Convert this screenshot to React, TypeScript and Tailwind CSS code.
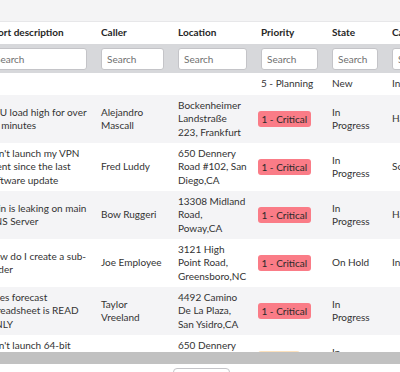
import React from "react";

const cols = "grid grid-cols-[114px_77px_83px_71px_60px_80px]";

type Row = {
  desc: string;
  caller: string;
  location: string;
  priority: string;
  badge: string;
  state: string;
  category: string;
};

const rows: Row[] = [
  {
    desc: "CPU load high for over 10 minutes",
    caller: "Alejandro Mascall",
    location: "Bockenheimer Landstraße 223, Frankfurt",
    priority: "1 - Critical",
    badge: "bg-[#fa7c87]",
    state: "In Progress",
    category: "Hardware",
  },
  {
    desc: "Can't launch my VPN client since the last software update",
    caller: "Fred Luddy",
    location: "650 Dennery Road #102, San Diego,CA",
    priority: "1 - Critical",
    badge: "bg-[#fa7c87]",
    state: "In Progress",
    category: "Software",
  },
  {
    desc: "Rain is leaking on main DNS Server",
    caller: "Bow Ruggeri",
    location: "13308 Midland Road, Poway,CA",
    priority: "1 - Critical",
    badge: "bg-[#fa7c87]",
    state: "In Progress",
    category: "Hardware",
  },
  {
    desc: "How do I create a sub-folder",
    caller: "Joe Employee",
    location: "3121 High Point Road, Greensboro,NC",
    priority: "1 - Critical",
    badge: "bg-[#fa7c87]",
    state: "On Hold",
    category: "Inquiry / Help",
  },
  {
    desc: "Sales forecast spreadsheet is READ ONLY",
    caller: "Taylor Vreeland",
    location: "4492 Camino De La Plaza, San Ysidro,CA",
    priority: "1 - Critical",
    badge: "bg-[#fa7c87]",
    state: "In Progress",
    category: "",
  },
  {
    desc: "Can't launch 64-bit Windows 7 applications",
    caller: "",
    location: "650 Dennery Road #102, San Diego,CA",
    priority: "2 - High",
    badge: "bg-[#fde1bc]",
    state: "In Progress",
    category: "Software",
  },
];

function SearchBox() {
  return (
    <input
      placeholder="Search"
      className="block h-[22px] w-full rounded-[3px] border border-[#c4c4c8] bg-white px-[5px] text-[10px] text-[#333] placeholder:text-[#6f6f6f] outline-none"
    />
  );
}

export default function App() {
  const headers = ["Short description", "Caller", "Location", "Priority", "State", "Category"];
  return (
    <div
      className="w-[400px] h-[372px] overflow-hidden bg-white text-[#333] text-[10px] leading-[13.5px]"
      style={{ fontFamily: "Lato, 'Open Sans', sans-serif" }}
    >
      <div className="h-[22px] bg-[#f4f4f5] border-b border-[#e7e7e9]" />
      <div className="h-[330px] overflow-hidden">
        <div className="ml-[-20px] w-[520px]">
          <div className={`${cols} h-[22px] items-center font-bold text-[#262626]`}>
            {headers.map((h) => (
              <div key={h} className="px-[7px] whitespace-nowrap">
                {h}
              </div>
            ))}
          </div>
          <div className={`${cols} h-[29px] bg-[#d7d8db] pt-[4px]`}>
            {headers.map((h, i) => (
              <div key={h} className={i === 0 ? "pl-[9px] pr-[7px]" : "px-[7px]"}>
                <SearchBox />
              </div>
            ))}
          </div>
          <div className={`${cols} h-[22px] items-center`}>
            <div className="px-[7px]" />
            <div className="px-[7px]" />
            <div className="px-[7px]" />
            <div className="px-[7px] whitespace-nowrap">5 - Planning</div>
            <div className="px-[7px]">New</div>
            <div className="px-[7px] whitespace-nowrap">Inquiry / Help</div>
          </div>
          {rows.map((r, i) => (
            <div
              key={i}
              className={`${cols} h-[48px] items-center ${i % 2 === 0 ? "bg-[#f4f4f6]" : "bg-white"}`}
            >
              <div className="pl-[7px] pr-[5px]">{r.desc}</div>
              <div className="px-[7px]">{r.caller}</div>
              <div className="px-[7px]">{r.location}</div>
              <div className="px-[7px]">
                <span
                  className={`inline-block ml-[-3px] px-[3.5px] rounded-[3px] leading-[16px] whitespace-nowrap text-[#2a2a2a] ${r.badge}`}
                >
                  {r.priority}
                </span>
              </div>
              <div className="px-[7px]">{r.state}</div>
              <div className="px-[7px] whitespace-nowrap">{r.category}</div>
            </div>
          ))}
        </div>
      </div>
      <div className="h-[12px] bg-[#c1c1c1]" />
      <div className="flex justify-center pt-[4px]">
        <div className="ml-[2px] h-[24px] w-[57px] rounded-[4px] border border-[#c4c4c8] bg-white" />
      </div>
    </div>
  );
}
